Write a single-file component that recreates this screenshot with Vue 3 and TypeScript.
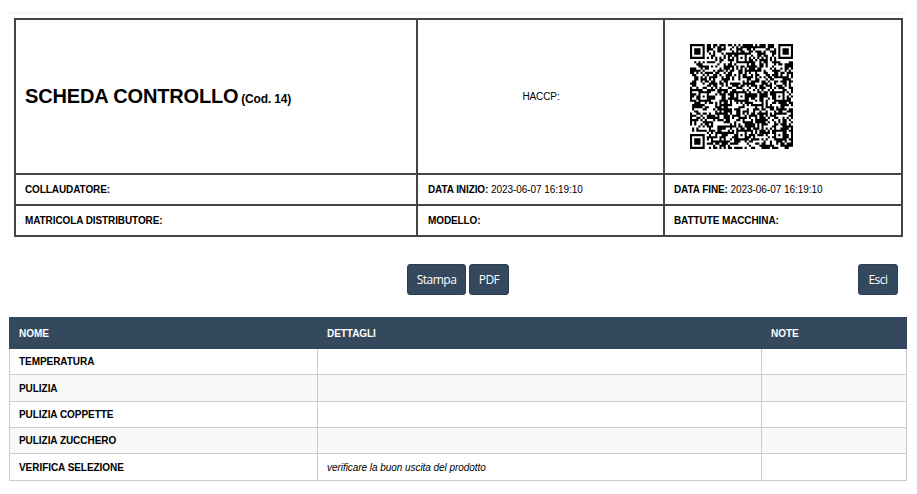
<template>
  <div class="page">
    <table class="scheda">
      <colgroup>
        <col class="c1" />
        <col class="c2" />
        <col class="c3" />
      </colgroup>
      <tbody>
        <tr class="top">
          <td class="titolo"><span class="big">SCHEDA CONTROLLO</span> <span class="cod">(Cod. 14)</span></td>
          <td class="haccp">HACCP:</td>
          <td class="qr-cell">
            <svg class="qr" viewBox="0 0 49 49" width="103" height="105" preserveAspectRatio="none">
              <path :d="qrPath" fill="#000" />
            </svg>
          </td>
        </tr>
        <tr v-for="(row, i) in infoRows" :key="i" class="info">
          <td v-for="cell in row" :key="cell.label">
            <b>{{ cell.label }}</b> <span class="val">{{ cell.value }}</span>
          </td>
        </tr>
      </tbody>
    </table>

    <div class="toolbar">
      <span></span>
      <div class="group">
        <button class="btn stampa">Stampa</button>
        <button class="btn">PDF</button>
      </div>
      <button class="btn esci">Esci</button>
    </div>

    <table class="lista">
      <colgroup>
        <col class="l1" />
        <col class="l2" />
        <col />
      </colgroup>
      <thead>
        <tr>
          <th>NOME</th>
          <th>DETTAGLI</th>
          <th>NOTE</th>
        </tr>
      </thead>
      <tbody>
        <tr v-for="r in controlli" :key="r.nome">
          <td class="nome">{{ r.nome }}</td>
          <td class="dett">{{ r.dettagli }}</td>
          <td></td>
        </tr>
      </tbody>
    </table>
  </div>
</template>

<script setup lang="ts">
const infoRows = [
  [
    { label: "COLLAUDATORE:", value: "" },
    { label: "DATA INIZIO:", value: "2023-06-07 16:19:10" },
    { label: "DATA FINE:", value: "2023-06-07 16:19:10" },
  ],
  [
    { label: "MATRICOLA DISTRIBUTORE:", value: "" },
    { label: "MODELLO:", value: "" },
    { label: "BATTUTE MACCHINA:", value: "" },
  ],
];

const controlli = [
  { nome: "TEMPERATURA", dettagli: "" },
  { nome: "PULIZIA", dettagli: "" },
  { nome: "PULIZIA COPPETTE", dettagli: "" },
  { nome: "PULIZIA ZUCCHERO", dettagli: "" },
  { nome: "VERIFICA SELEZIONE", dettagli: "verificare la buon uscita del prodotto" },
];

// finti moduli del qr: finder e allineamenti veri, il resto pseudo casuale
const SIZE = 49;

function buildQr(): string {
  let seed = 20230607;
  const rnd = () => {
    seed = (seed * 1103515245 + 12345) & 0x7fffffff;
    return (seed >> 12) % 100;
  };
  const grid: boolean[][] = [];
  for (let y = 0; y < SIZE; y++) {
    grid.push([]);
    for (let x = 0; x < SIZE; x++) grid[y].push(rnd() < 55);
  }
  const finder = (ox: number, oy: number) => {
    for (let y = -1; y < 8; y++) {
      for (let x = -1; x < 8; x++) {
        if (ox + x < 0 || oy + y < 0 || ox + x >= SIZE || oy + y >= SIZE) continue;
        const ring = x >= 0 && x <= 6 && y >= 0 && y <= 6 && (x === 0 || x === 6 || y === 0 || y === 6);
        const core = x >= 2 && x <= 4 && y >= 2 && y <= 4;
        grid[oy + y][ox + x] = ring || core;
      }
    }
  };
  finder(0, 0);
  finder(SIZE - 7, 0);
  finder(0, SIZE - 7);
  for (let i = 8; i < SIZE - 8; i++) {
    grid[6][i] = i % 2 === 0;
    grid[i][6] = i % 2 === 0;
  }
  const centers = [[24, 6], [6, 24], [24, 24], [42, 24], [24, 42], [42, 42]];
  for (const [cx, cy] of centers) {
    for (let y = -2; y <= 2; y++) {
      for (let x = -2; x <= 2; x++) {
        grid[cy + y][cx + x] = Math.max(Math.abs(x), Math.abs(y)) !== 1;
      }
    }
  }
  let d = "";
  grid.forEach((row, y) => {
    row.forEach((on, x) => {
      if (on) d += `M${x} ${y}h1v1h-1z`;
    });
  });
  return d;
}

const qrPath = buildQr();
</script>

<style>
body {
  background: #fff;
}
</style>

<style scoped>
.page {
  box-sizing: border-box;
  width: 917px;
  height: 494px;
  padding: 12px 10px 0 9px;
  overflow: hidden;
  font-family: "Liberation Sans", Arial, sans-serif;
  color: #000;
  background: #fff;
}

.page::before {
  content: "";
  display: block;
  height: 2px;
  width: 898px;
  background: #f8f4fb;
  margin-bottom: 4px;
}

.scheda {
  box-sizing: border-box;
  width: 889px;
  margin: 0 0 0 5px;
  border-collapse: collapse;
  table-layout: fixed;
  font-size: 10px;
  letter-spacing: -0.1px;
}

.c1 {
  width: 402px;
}

.c2 {
  width: 247px;
}

.scheda td {
  border: 2px solid #444;
  padding: 0 9px;
}

.scheda td:nth-child(2) {
  padding-left: 10px;
}

.top td {
  height: 153px;
}

.info td {
  height: 29px;
}

.val {
  letter-spacing: -0.05px;
}

.titolo {
  white-space: nowrap;
}

.big {
  font-size: 20px;
  font-weight: 700;
  letter-spacing: -0.15px;
}

.cod {
  font-size: 12px;
  font-weight: 700;
  letter-spacing: -0.15px;
}

.haccp {
  text-align: center;
}

.qr-cell {
  text-align: center;
}

.qr {
  display: block;
  margin: 0 0 0 16px;
}

.toolbar {
  display: grid;
  grid-template-columns: 1fr auto 1fr;
  align-items: center;
  margin-top: 27px;
}

.group {
  display: flex;
  gap: 3px;
}

.btn {
  width: 40px;
  height: 31px;
  padding: 0;
  border: 1px solid #2c3e50;
  border-radius: 3px;
  background: #34495e;
  color: #fff;
  font-family: "Open Sans", sans-serif;
  font-size: 12px;
  letter-spacing: -0.5px;
  line-height: 1;
}

.stampa {
  width: 59px;
}

.esci {
  justify-self: end;
  margin-right: 9px;
}

.lista {
  width: 898px;
  margin-top: 22px;
  border-collapse: collapse;
  table-layout: fixed;
  font-size: 10px;
  letter-spacing: -0.05px;
}

.l1 {
  width: 308px;
}

.l2 {
  width: 444px;
}

.lista th {
  height: 30px;
  padding: 0 9px;
  border: 1px solid #34495e;
  background: #34495e;
  color: #fff;
  font-weight: 700;
  text-align: left;
}

.lista td {
  height: 25px;
  padding: 0 9px;
  border: 1px solid #ccc;
}

.lista tbody tr:nth-child(2) td,
.lista tbody tr:nth-child(5) td {
  height: 26px;
}

.lista tbody tr:nth-child(even) td {
  background: #f9f9f9;
}

.nome {
  font-weight: 700;
}

.dett {
  font-style: italic;
}
</style>
